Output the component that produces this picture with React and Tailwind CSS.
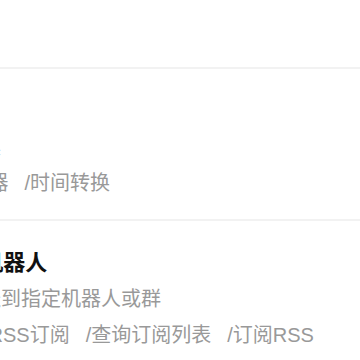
import React from "react";

const bots = [
  {
    title: "工具",
    desc: "小工具",
    commands: ["/定时器", "/时间转换"],
  },
  {
    title: "RSS机器人",
    desc: "可推送到指定机器人或群",
    commands: ["/取消RSS订阅", "/查询订阅列表", "/订阅RSS"],
  },
];

export default function App() {
  return (
    <div
      className="w-[360px] h-[360px] overflow-hidden bg-white"
      style={{ fontFamily: '"Liberation Sans", "Noto Sans CJK SC", sans-serif' }}
    >
      <div className="h-[69px] border-b-2 border-[#f2f2f2]" />
      <div className="-ml-[57px] w-[700px]">
        {bots.map((b) => (
          <div key={b.title} className="border-b-2 border-[#f2f2f2] pt-[26px] pb-[22px]">
            <div className="-ml-[7px] text-[22px] leading-[32px] font-bold text-[#111111] whitespace-nowrap">
              {b.title}
            </div>
            <div className="mt-[5.5px] -ml-[2px] text-[20px] leading-[28px] text-[#999999] whitespace-nowrap">
              {b.desc}
            </div>
            <div className="mt-[8.5px] flex gap-4 text-[20px] leading-[28px] text-[#999999] whitespace-nowrap">
              {b.commands.map((c) => (
                <span key={c}>{c}</span>
              ))}
            </div>
          </div>
        ))}
      </div>
    </div>
  );
}
